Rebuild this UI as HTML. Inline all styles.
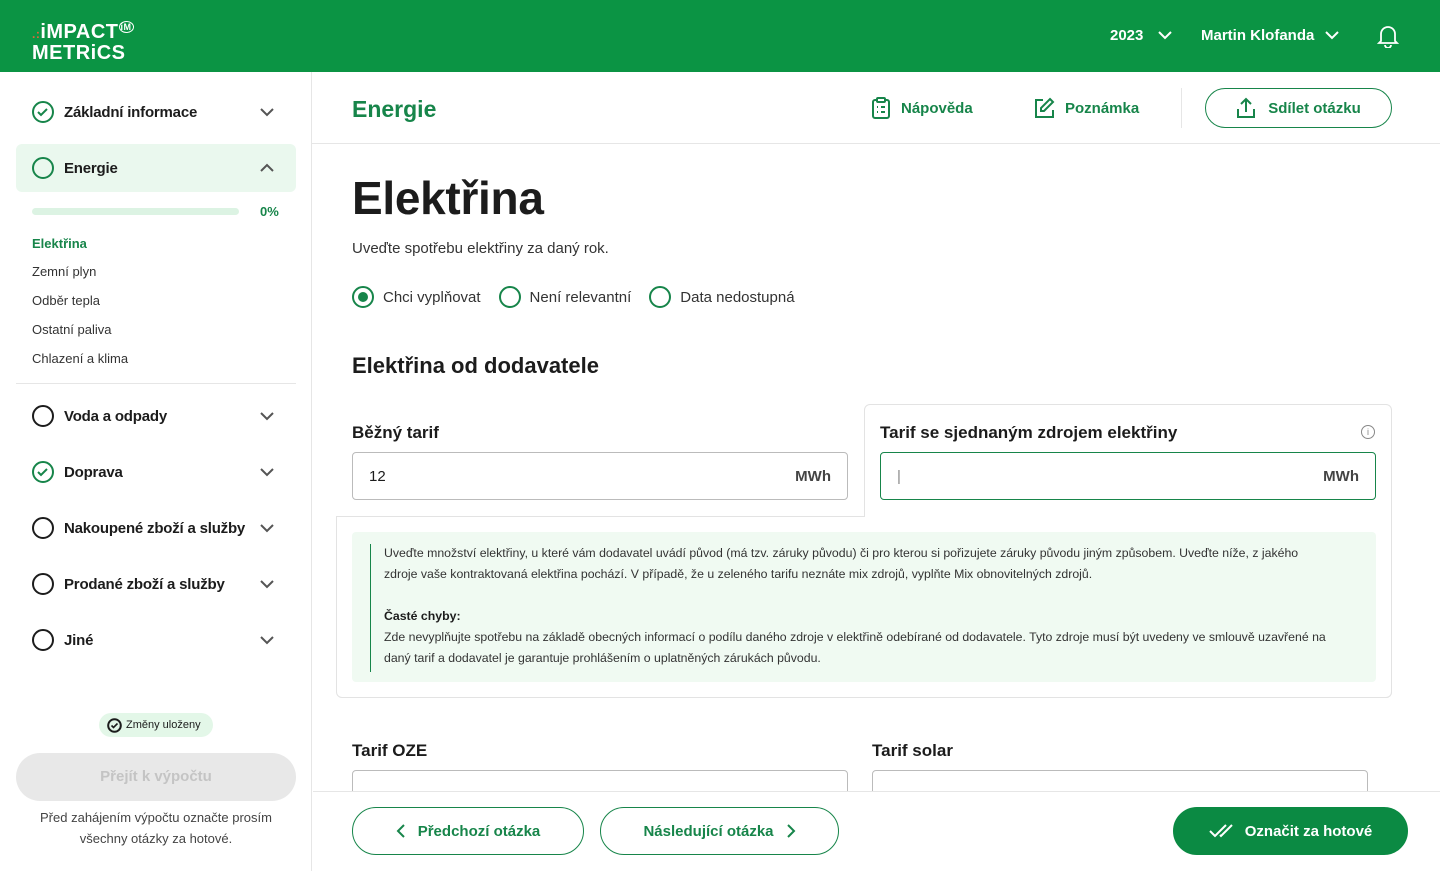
<!DOCTYPE html>
<html><head><meta charset="utf-8"><style>
*{box-sizing:border-box;margin:0;padding:0}
body{width:1440px;height:871px;overflow:hidden;font-family:"Liberation Sans",sans-serif;color:#1c1c1c;background:#fff;position:relative}
.hdr{position:absolute;left:0;top:0;width:1440px;height:72px;background:#0b9444;color:#fff}
.abs{position:absolute}
.g{color:#17854a}
.side{position:absolute;left:0;top:72px;width:312px;height:799px;border-right:1px solid #e6e6e6}
.item{position:absolute;left:32px;font-size:15px;font-weight:bold;display:flex;align-items:center;gap:10px;letter-spacing:-.2px}
.circ{width:22px;height:22px;border:2px solid #1c1c1c;border-radius:50%;display:inline-block}
.chev{position:absolute;left:260px;width:14px;height:14px}
.sub{position:absolute;left:32px;font-size:13px;color:#333}
.sub.g{color:#17854a}
.radio{width:22px;height:22px;border:2px solid #17854a;border-radius:50%;display:inline-block;position:relative}
.btn{position:absolute;border:1.5px solid #17854a;border-radius:24px;color:#17854a;font-weight:bold;font-size:15px;display:flex;align-items:center;justify-content:center;gap:12px}
.inp{position:absolute;height:48px;border:1px solid #bbb;border-radius:4px;font-size:15px}
</style></head><body>
<div class="hdr">
 <div class="abs" style="left:32px;top:18px;font-weight:bold;font-size:20px;line-height:19px;letter-spacing:.5px">
  <div><span style="color:#e0683a;font-size:12px">.:</span>iMPACT<sup style="font-size:9px;border:1px solid #fff;border-radius:50%;padding:0 1px;vertical-align:8px">iM</sup></div><div>METRiCS</div></div>
 <div class="abs" style="left:1110px;top:27px;font-size:15px;font-weight:bold">2023</div>
 <svg class="abs" style="left:1158px;top:30px" width="14" height="10" viewBox="0 0 14 10"><path d="M1 2l6 6 6-6" stroke="#fff" stroke-width="2" fill="none"/></svg>
 <div class="abs" style="left:1201px;top:27px;font-size:15px;font-weight:bold">Martin Klofanda</div>
 <svg class="abs" style="left:1325px;top:30px" width="14" height="10" viewBox="0 0 14 10"><path d="M1 2l6 6 6-6" stroke="#fff" stroke-width="2" fill="none"/></svg>
 <svg class="abs" style="left:1377px;top:24px" width="22" height="24" viewBox="0 0 22 24"><path d="M4 17V10a7 7 0 0114 0v7l2 2H2z M8 21a3 3 0 006 0" stroke="#fff" stroke-width="1.8" fill="none"/></svg>
</div>

<div class="side">
 <div class="item" style="top:29px"><span class="circ" style="border-color:#17854a;position:relative"><svg class="abs" style="left:3px;top:4px" width="12" height="10"><path d="M1 5l3 3 6-6" stroke="#17854a" stroke-width="2" fill="none"/></svg></span>Základní informace</div>
 <svg class="chev" style="top:33px" viewBox="0 0 14 14"><path d="M1 4l6 6 6-6" stroke="#555" stroke-width="2" fill="none"/></svg>
 <div class="abs" style="left:16px;top:72px;width:280px;height:48px;background:#eaf8ee;border-radius:6px"></div>
 <div class="item" style="top:85px"><span class="circ" style="border-color:#17854a"></span>Energie</div>
 <svg class="chev" style="top:89px" viewBox="0 0 14 14"><path d="M1 10l6-6 6 6" stroke="#555" stroke-width="2" fill="none"/></svg>
 <div class="abs" style="left:32px;top:136px;width:207px;height:7px;background:#dcf3e3;border-radius:4px"></div>
 <div class="abs g" style="left:260px;top:132px;font-size:13px;font-weight:bold">0%</div>
 <div class="sub g" style="top:164px;font-weight:bold">Elektřina</div>
 <div class="sub" style="top:192px">Zemní plyn</div>
 <div class="sub" style="top:221px">Odběr tepla</div>
 <div class="sub" style="top:250px">Ostatní paliva</div>
 <div class="sub" style="top:279px">Chlazení a klima</div>
 <div class="abs" style="left:16px;top:311px;width:280px;height:1px;background:#e6e6e6"></div>
 <div class="item" style="top:333px"><span class="circ"></span>Voda a odpady</div>
 <svg class="chev" style="top:337px" viewBox="0 0 14 14"><path d="M1 4l6 6 6-6" stroke="#555" stroke-width="2" fill="none"/></svg>
 <div class="item" style="top:389px"><span class="circ" style="border-color:#17854a;position:relative"><svg class="abs" style="left:3px;top:4px" width="12" height="10"><path d="M1 5l3 3 6-6" stroke="#17854a" stroke-width="2" fill="none"/></svg></span>Doprava</div>
 <svg class="chev" style="top:393px" viewBox="0 0 14 14"><path d="M1 4l6 6 6-6" stroke="#555" stroke-width="2" fill="none"/></svg>
 <div class="item" style="top:445px"><span class="circ"></span>Nakoupené zboží a služby</div>
 <svg class="chev" style="top:449px" viewBox="0 0 14 14"><path d="M1 4l6 6 6-6" stroke="#555" stroke-width="2" fill="none"/></svg>
 <div class="item" style="top:501px"><span class="circ"></span>Prodané zboží a služby</div>
 <svg class="chev" style="top:505px" viewBox="0 0 14 14"><path d="M1 4l6 6 6-6" stroke="#555" stroke-width="2" fill="none"/></svg>
 <div class="item" style="top:557px"><span class="circ"></span>Jiné</div>
 <svg class="chev" style="top:561px" viewBox="0 0 14 14"><path d="M1 4l6 6 6-6" stroke="#555" stroke-width="2" fill="none"/></svg>
 <div class="abs" style="left:99px;top:641px;width:114px;height:24px;background:#e3f7e8;border-radius:12px;font-size:11px;display:flex;align-items:center;gap:4px;padding-left:8px"><svg width="15" height="15" viewBox="0 0 15 15"><circle cx="7.5" cy="7.5" r="6.3" stroke="#1c1c1c" stroke-width="2" fill="none"/><path d="M4.5 7.5l2 2 4-4" stroke="#1c1c1c" stroke-width="1.6" fill="none"/></svg>Změny uloženy</div>
 <div class="abs" style="left:16px;top:681px;width:280px;height:48px;background:#e8e8e8;border-radius:24px;color:#c4c4c4;font-weight:bold;font-size:15px;text-align:center;line-height:48px">Přejít k výpočtu</div>
 <div class="abs" style="left:16px;top:735px;width:280px;text-align:center;font-size:13px;line-height:21px;color:#444">Před zahájením výpočtu označte prosím všechny otázky za hotové.</div>
</div>

<div class="abs g" style="left:352px;top:96px;font-size:23px;font-weight:bold">Energie</div>
<svg class="abs" style="left:871px;top:97px" width="20" height="22" viewBox="0 0 20 22"><rect x="2" y="3" width="16" height="18" rx="2" stroke="#17854a" stroke-width="2" fill="none"/><rect x="6" y="1" width="8" height="4" rx="1" stroke="#17854a" stroke-width="2" fill="#fff"/><path d="M6 10h1M10 10h4M6 15h1M10 15h4" stroke="#17854a" stroke-width="2"/></svg>
<div class="abs g" style="left:901px;top:100px;font-size:15px;font-weight:bold">Nápověda</div>
<svg class="abs" style="left:1033px;top:97px" width="22" height="22" viewBox="0 0 22 22"><path d="M10 3H3v17h17v-7" stroke="#17854a" stroke-width="2" fill="none"/><path d="M17 2l3 3-9 9H8v-3z" stroke="#17854a" stroke-width="2" fill="none"/></svg>
<div class="abs g" style="left:1065px;top:100px;font-size:15px;font-weight:bold">Poznámka</div>
<div class="abs" style="left:1181px;top:88px;width:1px;height:40px;background:#e6e6e6"></div>
<div class="btn" style="left:1205px;top:88px;width:187px;height:40px"><svg width="20" height="22" viewBox="0 0 20 22"><path d="M10 15V2M5 7l5-5 5 5M2 12v8h16v-8" stroke="#17854a" stroke-width="2" fill="none"/></svg>Sdílet otázku</div>
<div class="abs" style="left:312px;top:143px;width:1128px;height:1px;background:#e6e6e6"></div>

<div class="abs" style="left:352px;top:171px;font-size:46px;font-weight:bold;letter-spacing:-.3px">Elektřina</div>
<div class="abs" style="left:352px;top:240px;font-size:15px;color:#333">Uveďte spotřebu elektřiny za daný rok.</div>
<div class="abs" style="left:352px;top:286px;display:flex;align-items:center;font-size:15px;color:#333">
 <span class="radio"><span class="abs" style="left:4px;top:4px;width:10px;height:10px;background:#17854a;border-radius:50%"></span></span><span style="margin:0 18px 0 9px">Chci vyplňovat</span>
 <span class="radio"></span><span style="margin:0 18px 0 9px">Není relevantní</span>
 <span class="radio"></span><span style="margin:0 0 0 9px">Data nedostupná</span>
</div>
<div class="abs" style="left:352px;top:353px;font-size:22px;font-weight:bold">Elektřina od dodavatele</div>

<div class="abs" style="left:864px;top:404px;width:528px;height:294px;border:1px solid #e3e3e3;border-radius:6px"></div>
<div class="abs" style="left:336px;top:516px;width:1056px;height:182px;border:1px solid #e3e3e3;border-top:none;border-radius:0 0 6px 6px;background:#fff"></div>
<div class="abs" style="left:336px;top:516px;width:529px;height:1px;background:#e3e3e3"></div>
<div class="abs" style="left:336px;top:516px;width:1px;height:10px;background:#e3e3e3"></div>
<div class="abs" style="left:865px;top:505px;width:526px;height:13px;background:#fff"></div>

<div class="abs" style="left:352px;top:423px;font-size:17px;font-weight:bold">Běžný tarif</div>
<div class="inp" style="left:352px;top:452px;width:496px"><span class="abs" style="left:16px;top:15px">12</span><span class="abs" style="right:16px;top:15px;font-weight:bold;color:#444">MWh</span></div>
<div class="abs" style="left:880px;top:423px;font-size:17px;font-weight:bold">Tarif se sjednaným zdrojem elektřiny</div>
<div class="abs" style="left:1361px;top:425px;width:14px;height:14px;border:1px solid #888;border-radius:50%;font-size:9px;text-align:center;line-height:12px;color:#888">i</div>
<div class="inp" style="left:880px;top:452px;width:496px;border-color:#17854a"><span class="abs" style="left:16px;top:15px;color:#888">|</span><span class="abs" style="right:16px;top:15px;font-weight:bold;color:#444">MWh</span></div>

<div class="abs" style="left:352px;top:532px;width:1024px;height:150px;background:#f0faf2;border-radius:4px"></div>
<div class="abs" style="left:370px;top:544px;width:1px;height:128px;background:#17854a"></div>
<div class="abs" style="left:384px;top:543px;width:950px;font-size:12.3px;line-height:21px;color:#333">Uveďte množství elektřiny, u které vám dodavatel uvádí původ (má tzv. záruky původu) či pro kterou si pořizujete záruky původu jiným způsobem. Uveďte níže, z jakého zdroje vaše kontraktovaná elektřina pochází. V případě, že u zeleného tarifu neznáte mix zdrojů, vyplňte Mix obnovitelných zdrojů.<br><br><b style="color:#1c1c1c">Časté chyby:</b><br>Zde nevyplňujte spotřebu na základě obecných informací o podílu daného zdroje v elektřině odebírané od dodavatele. Tyto zdroje musí být uvedeny ve smlouvě uzavřené na daný tarif a dodavatel je garantuje prohlášením o uplatněných zárukách původu.</div>

<div class="abs" style="left:352px;top:741px;font-size:17px;font-weight:bold">Tarif OZE</div>
<div class="abs" style="left:872px;top:741px;font-size:17px;font-weight:bold">Tarif solar</div>
<div class="inp" style="left:352px;top:770px;width:496px"></div>
<div class="inp" style="left:872px;top:770px;width:496px"></div>

<div class="abs" style="left:313px;top:791px;width:1127px;height:80px;background:#fff;border-top:1px solid #e6e6e6"></div>
<div class="btn" style="left:352px;top:807px;width:232px;height:48px"><svg width="10" height="14"><path d="M8 1L2 7l6 6" stroke="#17854a" stroke-width="2" fill="none"/></svg>Předchozí otázka</div>
<div class="btn" style="left:600px;top:807px;width:239px;height:48px">Následující otázka<svg width="10" height="14"><path d="M2 1l6 6-6 6" stroke="#17854a" stroke-width="2" fill="none"/></svg></div>
<div class="btn" style="left:1173px;top:807px;width:235px;height:48px;background:#0b8a43;color:#fff;border-color:#0b8a43"><svg width="24" height="14" viewBox="0 0 24 14"><path d="M1 7l5 5L17 1M11 11l1 1L23 1" stroke="#fff" stroke-width="2" fill="none"/></svg>Označit za hotové</div>
</body></html>
